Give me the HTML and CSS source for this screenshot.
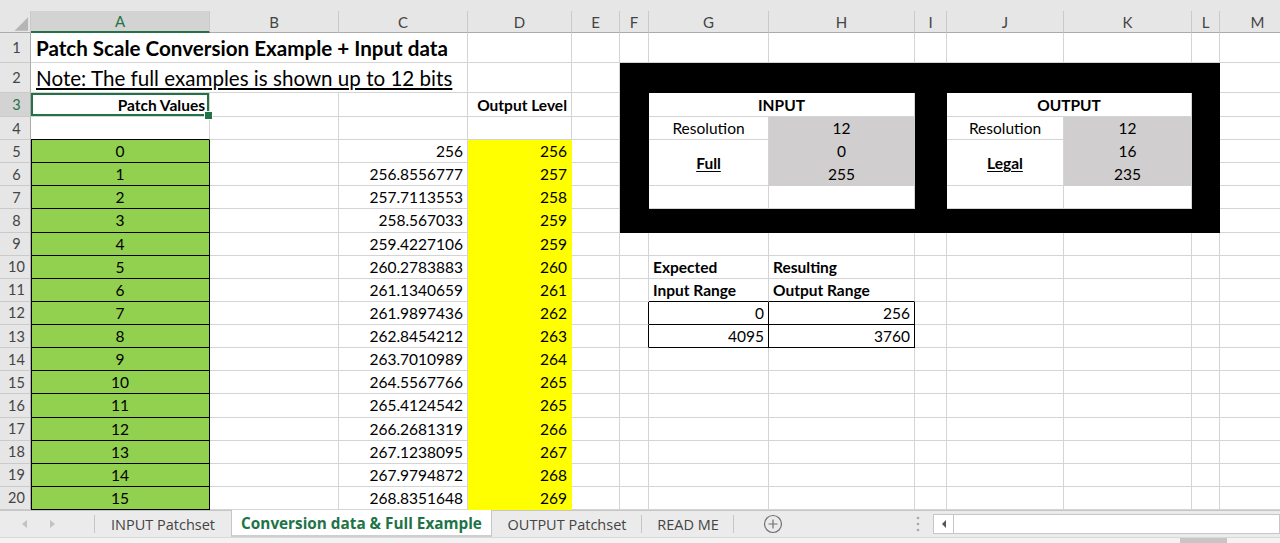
FILE: index.html
```html
<!DOCTYPE html>
<html>
<head>
<meta charset="utf-8">
<link rel="stylesheet" href="styles.css">
</head>
<body>
<div class="app">
  <div class="topstrip"></div>
  <div class="sheet">
    <!-- column headers -->
    <div class="h corner"><svg width="31" height="21" viewBox="0 0 31 21"><polygon points="29,6 29,20 15,20" fill="#b5b5b5"/></svg></div>
    <div class="h hsel">A</div><div class="h">B</div><div class="h">C</div><div class="h">D</div><div class="h">E</div><div class="h">F</div><div class="h">G</div><div class="h">H</div><div class="h">I</div><div class="h">J</div><div class="h">K</div><div class="h">L</div><div class="h">M</div>

    <!-- black block F2:L8 with INPUT / OUTPUT boxes -->
    <div class="blk">
      <div class="box in">
        <div class="bc span2 b">INPUT</div>
        <div class="bc">Resolution</div>
        <div class="bc gy">12</div>
        <div class="bc rs2 b u">Full</div>
        <div class="bc gy">0</div>
        <div class="bc gy">255</div>
        <div class="bc"></div>
        <div class="bc"></div>
      </div>
      <div class="box out">
        <div class="bc span2 b">OUTPUT</div>
        <div class="bc">Resolution</div>
        <div class="bc gy">12</div>
        <div class="bc rs2 b u">Legal</div>
        <div class="bc gy">16</div>
        <div class="bc gy">235</div>
        <div class="bc"></div>
        <div class="bc"></div>
      </div>
    </div>

    <!-- row 1 -->
    <div class="c rh">1</div><div class="c span3 title b">Patch Scale Conversion Example + Input data</div><div class="c"></div><div class="c"></div><div class="c"></div><div class="c"></div><div class="c"></div><div class="c"></div><div class="c"></div><div class="c"></div><div class="c"></div><div class="c"></div>
    <!-- row 2 -->
    <div class="c rh">2</div><div class="c span3 title u">Note: The full examples is shown up to 12 bits</div><div class="c"></div><div class="c"></div><div class="c"></div>
    <!-- row 3 -->
    <div class="c rh rsel">3</div><div class="c r b selcell">Patch Values</div><div class="c"></div><div class="c"></div><div class="c r b">Output Level</div><div class="c"></div><div class="c"></div>
    <!-- row 4 -->
    <div class="c rh">4</div><div class="c a4"></div><div class="c"></div><div class="c"></div><div class="c"></div><div class="c"></div><div class="c"></div>
    <!-- rows 5-8 -->
    <div class="c rh">5</div><div class="c g">0</div><div class="c"></div><div class="c r">256</div><div class="c y">256</div><div class="c"></div><div class="c"></div>
    <div class="c rh">6</div><div class="c g">1</div><div class="c"></div><div class="c r">256.8556777</div><div class="c y">257</div><div class="c"></div><div class="c"></div>
    <div class="c rh">7</div><div class="c g">2</div><div class="c"></div><div class="c r">257.7113553</div><div class="c y">258</div><div class="c"></div><div class="c"></div>
    <div class="c rh">8</div><div class="c g">3</div><div class="c"></div><div class="c r">258.567033</div><div class="c y">259</div><div class="c"></div><div class="c"></div>
    <!-- row 9 -->
    <div class="c rh">9</div><div class="c g">4</div><div class="c"></div><div class="c r">259.4227106</div><div class="c y">259</div><div class="c"></div><div class="c"></div><div class="c"></div><div class="c"></div><div class="c"></div><div class="c"></div><div class="c"></div><div class="c"></div><div class="c"></div>
    <!-- row 10 -->
    <div class="c rh">10</div><div class="c g">5</div><div class="c"></div><div class="c r">260.2783883</div><div class="c y">260</div><div class="c"></div><div class="c"></div><div class="c b">Expected</div><div class="c b">Resulting</div><div class="c"></div><div class="c"></div><div class="c"></div><div class="c"></div><div class="c"></div>
    <!-- row 11 -->
    <div class="c rh">11</div><div class="c g">6</div><div class="c"></div><div class="c r">261.1340659</div><div class="c y">261</div><div class="c"></div><div class="c"></div><div class="c b kb">Input Range</div><div class="c b kb">Output Range</div><div class="c"></div><div class="c"></div><div class="c"></div><div class="c"></div><div class="c"></div>
    <!-- row 12 -->
    <div class="c rh">12</div><div class="c g">7</div><div class="c"></div><div class="c r">261.9897436</div><div class="c y">262</div><div class="c"></div><div class="c kr"></div><div class="c r kx">0</div><div class="c r kx">256</div><div class="c"></div><div class="c"></div><div class="c"></div><div class="c"></div><div class="c"></div>
    <!-- row 13 -->
    <div class="c rh">13</div><div class="c g">8</div><div class="c"></div><div class="c r">262.8454212</div><div class="c y">263</div><div class="c"></div><div class="c kr"></div><div class="c r kx">4095</div><div class="c r kx">3760</div><div class="c"></div><div class="c"></div><div class="c"></div><div class="c"></div><div class="c"></div>
    <!-- rows 14-20 -->
    <div class="c rh">14</div><div class="c g">9</div><div class="c"></div><div class="c r">263.7010989</div><div class="c y">264</div><div class="c"></div><div class="c"></div><div class="c"></div><div class="c"></div><div class="c"></div><div class="c"></div><div class="c"></div><div class="c"></div><div class="c"></div>
    <div class="c rh">15</div><div class="c g">10</div><div class="c"></div><div class="c r">264.5567766</div><div class="c y">265</div><div class="c"></div><div class="c"></div><div class="c"></div><div class="c"></div><div class="c"></div><div class="c"></div><div class="c"></div><div class="c"></div><div class="c"></div>
    <div class="c rh">16</div><div class="c g">11</div><div class="c"></div><div class="c r">265.4124542</div><div class="c y">265</div><div class="c"></div><div class="c"></div><div class="c"></div><div class="c"></div><div class="c"></div><div class="c"></div><div class="c"></div><div class="c"></div><div class="c"></div>
    <div class="c rh">17</div><div class="c g">12</div><div class="c"></div><div class="c r">266.2681319</div><div class="c y">266</div><div class="c"></div><div class="c"></div><div class="c"></div><div class="c"></div><div class="c"></div><div class="c"></div><div class="c"></div><div class="c"></div><div class="c"></div>
    <div class="c rh">18</div><div class="c g">13</div><div class="c"></div><div class="c r">267.1238095</div><div class="c y">267</div><div class="c"></div><div class="c"></div><div class="c"></div><div class="c"></div><div class="c"></div><div class="c"></div><div class="c"></div><div class="c"></div><div class="c"></div>
    <div class="c rh">19</div><div class="c g">14</div><div class="c"></div><div class="c r">267.9794872</div><div class="c y">268</div><div class="c"></div><div class="c"></div><div class="c"></div><div class="c"></div><div class="c"></div><div class="c"></div><div class="c"></div><div class="c"></div><div class="c"></div>
    <div class="c rh">20</div><div class="c g">15</div><div class="c"></div><div class="c r">268.8351648</div><div class="c y">269</div><div class="c"></div><div class="c"></div><div class="c"></div><div class="c"></div><div class="c"></div><div class="c"></div><div class="c"></div><div class="c"></div><div class="c"></div>
  </div>

  <div class="tabs">
    <div class="nav">
      <svg width="8" height="10" viewBox="0 0 8 10"><polygon points="6,1 6,9 1,5" fill="#c2c2c2"/></svg>
      <svg width="8" height="10" viewBox="0 0 8 10"><polygon points="2,1 2,9 7,5" fill="#c2c2c2"/></svg>
    </div>
    <div class="tab t1">INPUT Patchset</div>
    <div class="tab active">Conversion data &amp; Full Example</div>
    <div class="tab t3">OUTPUT Patchset</div>
    <div class="tab t4">READ ME</div>
    <div class="plus"><svg width="20" height="20" viewBox="0 0 20 20"><circle cx="10" cy="10" r="8.5" fill="none" stroke="#707070" stroke-width="1.2"/><path d="M10 5.5v9M5.5 10h9" stroke="#707070" stroke-width="1.2"/></svg></div>
    <div class="gap"></div>
    <div class="dots"><svg width="4" height="16" viewBox="0 0 4 16"><circle cx="2" cy="2" r="1.3" fill="#a8a8a8"/><circle cx="2" cy="8" r="1.3" fill="#a8a8a8"/><circle cx="2" cy="14" r="1.3" fill="#a8a8a8"/></svg></div>
    <div class="hscroll">
      <div class="sbtn"><svg width="6" height="10" viewBox="0 0 6 10"><polygon points="5,1 5,9 1,5" fill="#555"/></svg></div>
    </div>
  </div>
  <div class="bottom"><div class="thumb"></div></div>
</div>
</body>
</html>
```

FILE: styles.css
```css
* { box-sizing: border-box; }
html, body { margin: 0; padding: 0; }
body {
  width: 1280px;
  height: 543px;
  overflow: hidden;
  background: #fff;
  font-family: Lato, "Liberation Sans", sans-serif;
  color: #000;
}
.app { display: flex; flex-direction: column; height: 543px; width: 1280px; overflow: hidden; }
.topstrip { height: 11px; background: #e6e6e6; flex: none; }

.sheet {
  flex: none;
  display: grid;
  grid-template-columns: 31px 179px 129px 129px 104px 48px 29px 120px 146px 32px 117px 128px 28px 76px;
  grid-template-rows: 22px 30px 30px 24px 23px repeat(16, 23.125px);
  font-size: 15.5px;
}

.h {
  background: #e6e6e6;
  border-right: 1px solid #cacaca;
  border-bottom: 1px solid #ababab;
  display: flex;
  align-items: center;
  justify-content: center;
  color: #444;
  font-size: 15px;
}
.corner { padding: 0; align-items: flex-start; justify-content: flex-start; }
.hsel {
  background: #d3d3d3;
  color: #217346;
  border-bottom: 2px solid #217346;
}

.c {
  border-right: 1px solid #d4d4d4;
  border-bottom: 1px solid #d4d4d4;
  display: flex;
  align-items: center;
  padding: 0 4px;
  white-space: nowrap;
  overflow: hidden;
  min-width: 0;
}
.rh {
  background: #e6e6e6;
  border-right: 1px solid #ababab;
  border-bottom: 1px solid #cacaca;
  justify-content: center;
  padding: 0 0 0 3px;
  color: #444;
  font-size: 14.5px;
}
.rsel { background: #d3d3d3; color: #217346; }

.span3 { grid-column: span 3; }
.title { font-size: 20.6px; padding-left: 5px; padding-top: 1px; }
.b { font-weight: 700; }
.u { text-decoration: underline; text-underline-offset: 2px; }
.r { justify-content: flex-end; }

.selcell {
  position: relative;
  overflow: visible;
  box-shadow: inset 0 0 0 2px #217346;
  z-index: 2;
}
.selcell::after {
  content: "";
  position: absolute;
  right: -4px;
  bottom: -4px;
  width: 7px;
  height: 7px;
  background: #217346;
  border: 1px solid #fff;
}

.a4 { border-bottom-color: #000; }
.g {
  background: #92d050;
  border-right-color: #000;
  border-bottom-color: #000;
  justify-content: center;
  box-shadow: inset 1px 0 0 #000;
}
.y {
  background: #ffff00;
  border-right-color: #ffff00;
  border-bottom-color: #ffff00;
  justify-content: flex-end;
}

.kb { border-bottom-color: #000; }
.kr { border-right-color: #000; }
.kx { border-right-color: #000; border-bottom-color: #000; }

.blk {
  grid-column: 7 / 14;
  grid-row: 3 / 10;
  background: #000;
  display: grid;
  grid-template-columns: 29px 266px 32px 245px 28px;
  grid-template-rows: 30px 1fr 23.125px;
}
.box {
  grid-row: 2;
  background: #fff;
  display: grid;
  grid-template-rows: 24px 23px repeat(3, 1fr);
}
.box.in { grid-column: 2; grid-template-columns: 120px 146px; }
.box.out { grid-column: 4; grid-template-columns: 117px 128px; }
.bc {
  display: flex;
  align-items: center;
  justify-content: center;
  border-right: 1px solid #d4d4d4;
  border-bottom: 1px solid #d4d4d4;
  white-space: nowrap;
}
.span2 { grid-column: span 2; }
.rs2 { grid-row: span 2; }
.gy { background: #d0cece; border-color: #d0cece; }

/* sheet tabs */
.tabs {
  flex: none;
  height: 27px;
  background: #ebebeb;
  border-top: 1px solid #c6c6c6;
  display: flex;
  align-items: stretch;
  font-family: "Open Sans", "Liberation Sans", sans-serif;
  font-size: 14.5px;
  color: #444;
}
.nav {
  width: 95px;
  display: flex;
  align-items: center;
  padding-left: 21px;
  gap: 19px;
  background: linear-gradient(#c6c6c6, #c6c6c6) right center / 1px 18px no-repeat;
}
.tab {
  display: flex;
  align-items: center;
  justify-content: center;
  white-space: nowrap;
  background: linear-gradient(#c6c6c6, #c6c6c6) right center / 1px 18px no-repeat;
}
.t1 { width: 136px; background: none; }
.active {
  width: 261px;
  background: #fff;
  color: #217346;
  font-weight: 700;
  font-size: 15.3px;
  margin-top: -1px;
  border-left: 1px solid #c6c6c6;
  border-right: 1px solid #c6c6c6;
  border-bottom: 2px solid #cfcfcf;
}
.t3 { width: 150px; }
.t4 { width: 92px; }
.plus {
  width: 78px;
  display: flex;
  align-items: center;
  justify-content: center;
}
.gap { width: 100px; }
.dots {
  width: 21px;
  display: flex;
  align-items: center;
  padding-left: 4px;
}
.hscroll {
  flex: 1;
  margin: 3px 0 3px 0;
  background: #fff;
  border: 1px solid #c6c6c6;
  display: flex;
}
.sbtn {
  width: 20px;
  border-right: 1px solid #c6c6c6;
  display: flex;
  align-items: center;
  justify-content: center;
}
.bottom {
  flex: 1;
  background: #f3f3f3;
  border-top: 1px solid #d9d9d9;
  display: flex;
  justify-content: flex-end;
  padding-right: 53px;
}
.thumb { width: 47px; background: #c6c6c6; }
```
